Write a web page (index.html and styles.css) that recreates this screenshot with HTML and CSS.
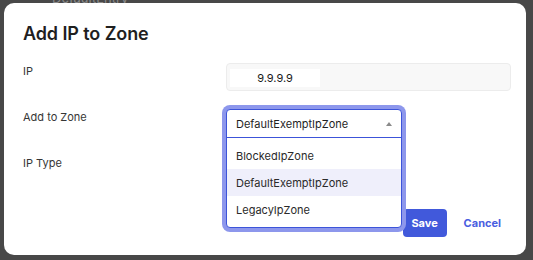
FILE: index.html
```html
<!DOCTYPE html>
<html>
<head>
<meta charset="utf-8">
<link rel="stylesheet" href="styles.css">
</head>
<body>
<div class="backdrop">
  <div class="bg-row"><span class="bg-dash">—</span><span>DefaultEntry</span></div>
</div>
<div class="modal">
  <h1 class="title">Add IP to Zone</h1>
  <div class="form">
    <div class="row">
      <div class="label">IP</div>
      <div class="field">
        <div class="input"><span class="input-value">9.9.9.9</span></div>
      </div>
    </div>
    <div class="row">
      <div class="label">Add to Zone</div>
      <div class="field">
        <div class="select-wrap">
          <div class="select">
            <span>DefaultExemptIpZone</span>
            <span class="arrow"></span>
          </div>
          <ul class="menu">
            <li class="option">BlockedIpZone</li>
            <li class="option active">DefaultExemptIpZone</li>
            <li class="option">LegacyIpZone</li>
          </ul>
        </div>
      </div>
    </div>
    <div class="row">
      <div class="label">IP Type</div>
      <div class="field"></div>
    </div>
  </div>
  <div class="actions">
    <button class="btn btn-primary">Save</button>
    <button class="btn btn-link">Cancel</button>
  </div>
</div>
</body>
</html>
```
FILE: styles.css
```css
* { box-sizing: border-box; }
html, body {
  margin: 0;
  padding: 0;
  width: 533px;
  height: 260px;
  overflow: hidden;
}
body {
  background: #484848;
  font-family: Inter, "Noto Sans", sans-serif;
  position: relative;
}
.backdrop {
  position: absolute;
  left: 0;
  top: -9px;
}
.bg-row {
  display: flex;
  gap: 8px;
  padding-left: 31px;
  color: #8a8a8a;
  font-size: 13px;
  line-height: 14px;
}
.modal {
  position: absolute;
  left: 4px;
  top: 3px;
  width: 522px;
  height: 252px;
  background: #fff;
  border-radius: 10px;
  padding: 20px 15px 0 19px;
  display: flex;
  flex-direction: column;
}
.title {
  margin: 0;
  font-size: 18px;
  line-height: 22px;
  font-weight: 560;
  color: #1f1f1f;
  letter-spacing: -0.1px;
}
.form {
  margin-top: 18px;
  display: flex;
  flex-direction: column;
  gap: 18px;
}
.row {
  display: grid;
  grid-template-columns: 203px 1fr;
  height: 28px;
}
.label {
  font-size: 11px;
  line-height: 16px;
  color: #363636;
}
.field { position: relative; }
.input {
  height: 28px;
  background: #f8f8f8;
  border: 1px solid #ececec;
  border-radius: 4px;
  padding: 5px 3px;
}
.input-value {
  display: block;
  width: 90px;
  height: 18px;
  background: #fff;
  text-align: center;
  font-size: 11px;
  line-height: 18px;
  color: #1a1a1a;
}
.select-wrap {
  position: absolute;
  left: 0;
  top: 0;
  width: 176px;
  z-index: 2;
  background: #fff;
  border: 1.5px solid #3c54d9;
  border-radius: 4px;
  box-shadow: 0 0 0 4px #8d97ec;
}
.select {
  height: 28px;
  display: flex;
  align-items: center;
  justify-content: space-between;
  padding: 0 9px 0 9px;
  font-size: 11px;
  color: #1f1f1f;
  border-bottom: 1.5px solid #3c54d9;
}
.arrow {
  width: 0;
  height: 0;
  border-left: 3px solid transparent;
  border-right: 3px solid transparent;
  border-bottom: 4px solid #8a8a8a;
  margin-top: 1px;
}
.menu {
  list-style: none;
  margin: 0;
  padding: 4px 0 4px;
}
.option {
  height: 27px;
  display: flex;
  align-items: center;
  padding-left: 9px;
  font-size: 11px;
  color: #2a2a2a;
}
.option.active { background: #efeffb; }
.actions {
  margin-top: 26px;
  display: flex;
  justify-content: flex-end;
  gap: 9px;
}
.btn {
  height: 28px;
  border: none;
  border-radius: 4px;
  font-family: Inter, "Noto Sans", sans-serif;
  font-size: 11px;
  font-weight: 700;
  padding: 0 10px;
}
.btn-primary {
  background: #4159db;
  color: #fff;
  width: 44px;
  padding: 0;
}
.btn-link {
  background: transparent;
  color: #4a5ee0;
  padding: 0 10px 0 8px;
}
```
